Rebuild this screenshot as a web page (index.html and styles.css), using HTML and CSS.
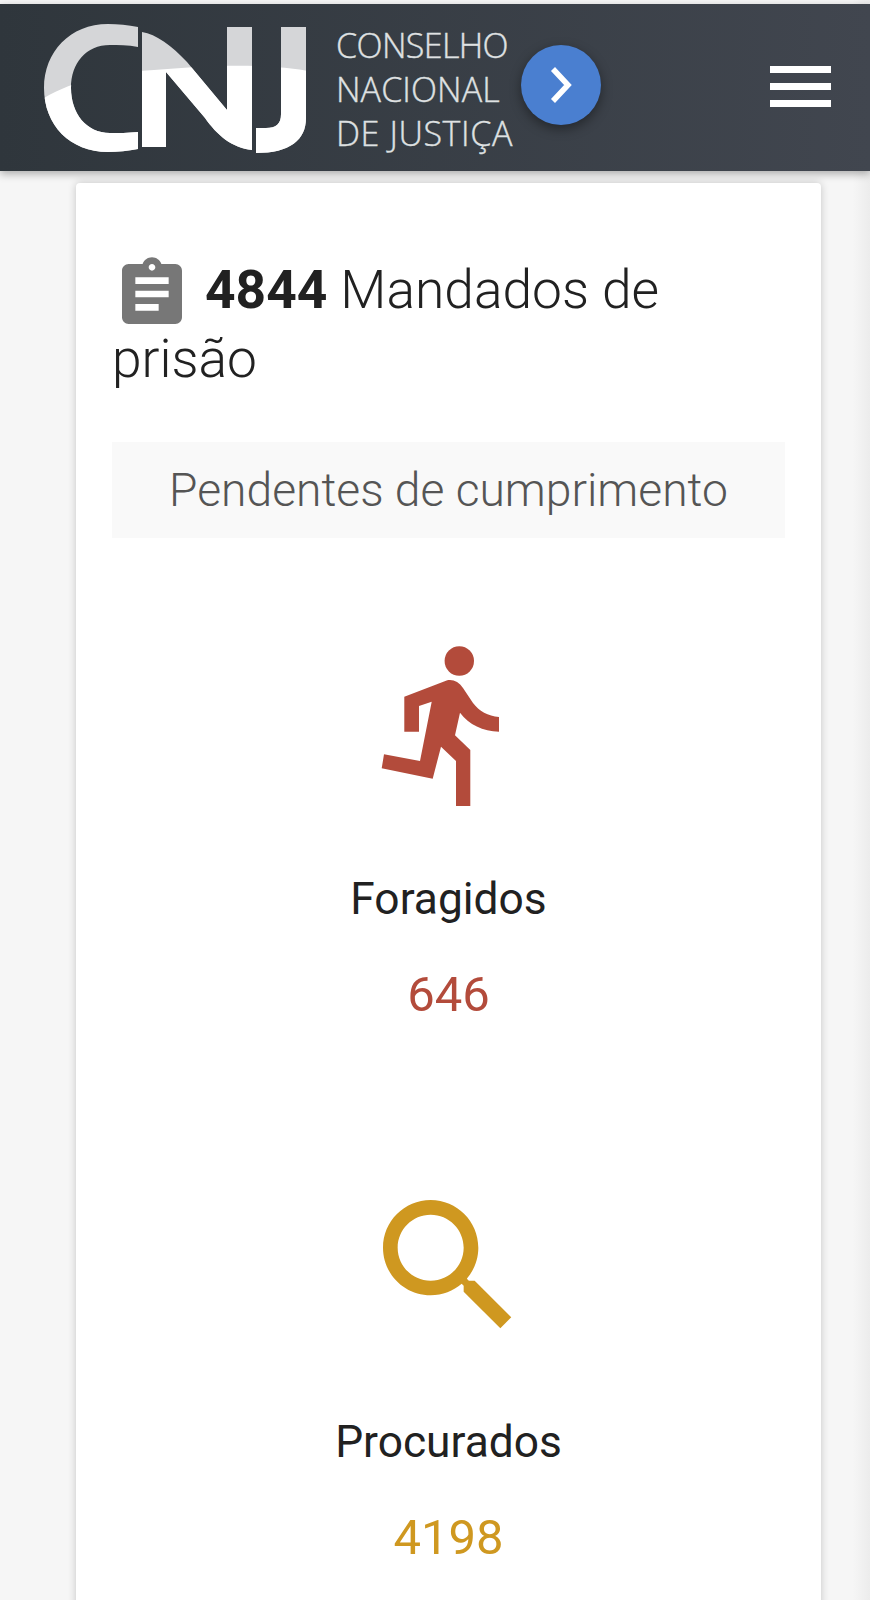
FILE: index.html
```html
<!DOCTYPE html>
<html lang="pt-BR">
<head>
  <meta charset="UTF-8">
  <meta name="viewport" content="width=device-width, initial-scale=1.0">
  <title>CNJ – Mandados de prisão</title>
  <link rel="stylesheet" href="styles.css">
</head>
<body>
  <header class="topbar">
    <div class="brand">
      <svg class="brand-mark" viewBox="0 0 270 134" aria-hidden="true">
        <defs>
          <g id="cnj">
            <path d="M94 3C84 1 74 0 64 0C26 0 0 28 0 64C0 101 26 128 64 128C74 128 84 127 94 125V108C84 109 74 109 66 109C42 109 27 89 27 64C27 39 42 21 66 21C74 21 84 21 94 23Z"/>
            <path d="M98 8C112 10 128 22 143 38L183 86V3H208V126C188 124 173 111 161 94L122 48V123H98Z"/>
            <path d="M237 3H262V94C262 116 246 129 212 129V104H222C232 104 237 100 237 90Z"/>
          </g>
          <clipPath id="cnj-lower">
            <path d="M0 74C30 56 70 48 110 46C160 42 220 38 270 48V134H0Z"/>
          </clipPath>
        </defs>
        <use href="#cnj" fill="#d5d6d8"/>
        <use href="#cnj" fill="#fff" clip-path="url(#cnj-lower)"/>
      </svg>
      <div class="brand-name">
        <span>CONSELHO</span>
        <span class="brand-mid">NACIONAL</span>
        <span class="brand-wide">DE JUSTIÇA</span>
      </div>
    </div>
    <button class="fab" aria-label="Avançar">
      <svg viewBox="0 0 24 40" aria-hidden="true"><path d="M4 4l15 16L4 36" fill="none" stroke="#fff" stroke-width="5.5"/></svg>
    </button>
    <button class="menu" aria-label="Menu"><i></i><i></i><i></i></button>
  </header>

  <main class="card">
    <h1 class="title">
      <svg class="title-icon" viewBox="0 0 24 24" aria-hidden="true"><path d="M19 3h-4.18C14.4 1.84 13.3 1 12 1c-1.3 0-2.4.84-2.82 2H5c-1.1 0-2 .9-2 2v14c0 1.1.9 2 2 2h14c1.1 0 2-.9 2-2V5c0-1.1-.9-2-2-2zm-7 0c.55 0 1 .45 1 1s-.45 1-1 1-1-.45-1-1 .45-1 1-1zm2 14H7v-2h7v2zm3-4H7v-2h10v2zm0-4H7V7h10v2z"/></svg>
      <strong>4844</strong> Mandados de prisão
    </h1>
    <div class="subtitle">Pendentes de cumprimento</div>

    <section class="stat stat-red">
      <svg class="stat-icon" viewBox="0 0 176 176" aria-hidden="true">
        <circle cx="98.3" cy="26" r="14.7"/>
        <path d="M86.3 45.3L43.3 61.7V96.7H58V71L70.7 66.7L59 126L23 119.3L20.7 133.3L71.7 143.7L80 111.7L95 126V171H109.3V115L94 100.3L99 77.7C108 90 122 96 138 96.7V82C127 81 118 76 112 68L102 53C98 47 92 44 86.3 45.3Z"/>
      </svg>
      <div class="stat-label">Foragidos</div>
      <div class="stat-value">646</div>
    </section>

    <section class="stat stat-yellow">
      <svg class="stat-icon" viewBox="0 0 24 24" aria-hidden="true"><path d="M15.5 14h-.79l-.28-.27C15.41 12.59 16 11.11 16 9.5 16 5.91 13.09 3 9.5 3S3 5.91 3 9.5 5.91 16 9.5 16c1.61 0 3.09-.59 4.23-1.57l.27.28v.79l5 4.99L20.49 19l-4.99-5zm-6 0C7.01 14 5 11.99 5 9.5S7.01 5 9.5 5 14 7.01 14 9.5 11.99 14 9.5 14z"/></svg>
      <div class="stat-label">Procurados</div>
      <div class="stat-value">4198</div>
    </section>
  </main>
</body>
</html>
```

FILE: styles.css
```css
*{box-sizing:border-box;}
html,body{height:1600px;overflow:hidden;}
body{margin:0;padding-top:4px;background:linear-gradient(90deg,#f6f6f6 98%,#ececec);color:#212121;font-family:'Roboto',sans-serif;}

.topbar{position:relative;z-index:1;display:flex;align-items:center;height:167px;padding-left:44px;background:linear-gradient(90deg,#2f363c,#41464f);box-shadow:0 3px 8px rgba(0,0,0,.3);}
.brand{display:flex;align-items:center;gap:22px;}
.brand-mark{display:block;width:270px;height:134px;margin-top:6px;fill:#fff;}
.brand-name{display:flex;flex-direction:column;width:185px;margin-top:2px;font-family:'Open Sans',sans-serif;font-size:34px;font-weight:300;line-height:44px;letter-spacing:-.6px;color:#dfe1e2;white-space:nowrap;-webkit-text-stroke:.4px #dfe1e2;}
.brand-mid{letter-spacing:.1px;}
.brand-wide{letter-spacing:.6px;}
.fab{display:flex;align-items:center;justify-content:center;width:80px;height:80px;margin-bottom:6px;padding:0;border:none;border-radius:50%;background:#4a7fd0;box-shadow:0 4px 12px rgba(0,0,0,.4);}
.fab svg{display:block;width:24px;height:40px;}
.menu{display:flex;flex-direction:column;gap:10px;margin:0 0 2px 169px;padding:0;border:none;background:none;}
.menu i{display:block;width:61px;height:7px;background:#fff;}

.card{width:745px;height:1500px;margin:12px 0 0 76px;padding:71px 36px 0;background:#fff;border-radius:4px;box-shadow:0 0 8px rgba(0,0,0,.2);}
.title{margin:0;font-size:53.3px;font-weight:300;line-height:69px;}
.title strong{font-weight:700;}
.title-icon{width:80px;height:80px;margin-bottom:-26px;fill:#777;}
.subtitle{height:96px;margin-top:48px;background:#f9f9f9;color:#555;font-size:46.2px;font-weight:300;line-height:96px;text-align:center;}

.stat{display:flex;flex-direction:column;align-items:center;}
.stat-red{margin-top:97px;color:#b34b3b;}
.stat-yellow{margin-top:153px;color:#cf9820;}
.stat-icon{display:block;width:176px;height:176px;fill:currentColor;}
.stat-label{margin-top:58px;color:#212121;font-size:44.3px;line-height:60px;}
.stat-value{margin-top:36px;font-size:49px;line-height:60px;}
```
